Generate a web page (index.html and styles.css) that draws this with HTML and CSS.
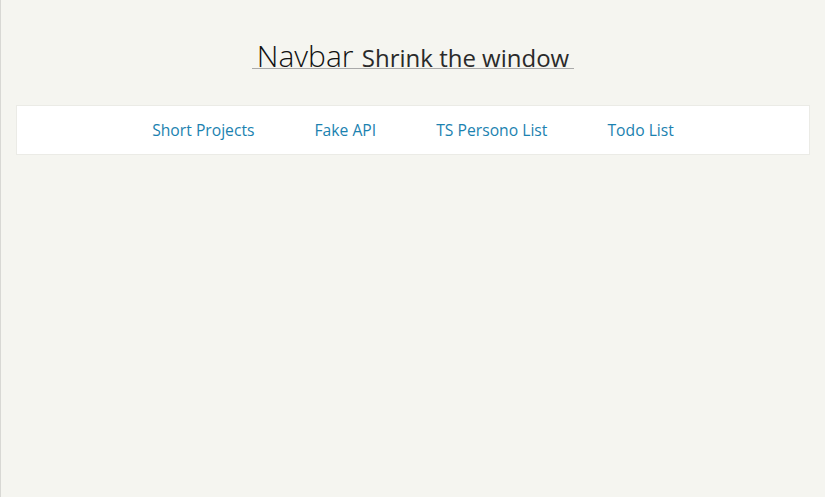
FILE: index.html
```html
<!DOCTYPE html>
<html>
<head>
<meta charset="utf-8">
<link rel="stylesheet" href="styles.css">
</head>
<body>
<div class="page">
  <header class="head">
    <h1 class="title"><span class="big">Navbar</span> <span class="small">Shrink the window</span></h1>
  </header>
  <nav class="nav">
    <a class="link" href="#">Short Projects</a>
    <a class="link" href="#">Fake API</a>
    <a class="link" href="#">TS Persono List</a>
    <a class="link" href="#">Todo List</a>
  </nav>
</div>
</body>
</html>
```
FILE: styles.css
```css
html, body {
  margin: 0;
  height: 100%;
}
body {
  background: #f5f5f0;
  font-family: "Open Sans", "Noto Sans", sans-serif;
  border-left: 1px solid #d8d8d4;
  box-sizing: border-box;
}
.page {
  padding: 0 15px;
}
.head {
  display: flex;
  justify-content: center;
  padding-top: 45px;
}
.title {
  margin: 0;
  font-weight: 300;
  color: #1a1a1a;
  border-bottom: 1px solid #aaa;
  padding: 0 5px;
  line-height: 20px;
  white-space: nowrap;
}
.big {
  font-size: 30px;
  font-weight: 300;
  color: #111;
}
.small {
  font-size: 24px;
  font-weight: 400;
  color: #2a2a2a;
}
.nav {
  margin-top: 36px;
  background: #fff;
  border: 1px solid #ebebe6;
  height: 48px;
  display: flex;
  justify-content: center;
  align-items: center;
}
.link {
  color: #1b82b0;
  text-decoration: none;
  font-size: 15.7px;
  padding: 0 30px;
}
```
